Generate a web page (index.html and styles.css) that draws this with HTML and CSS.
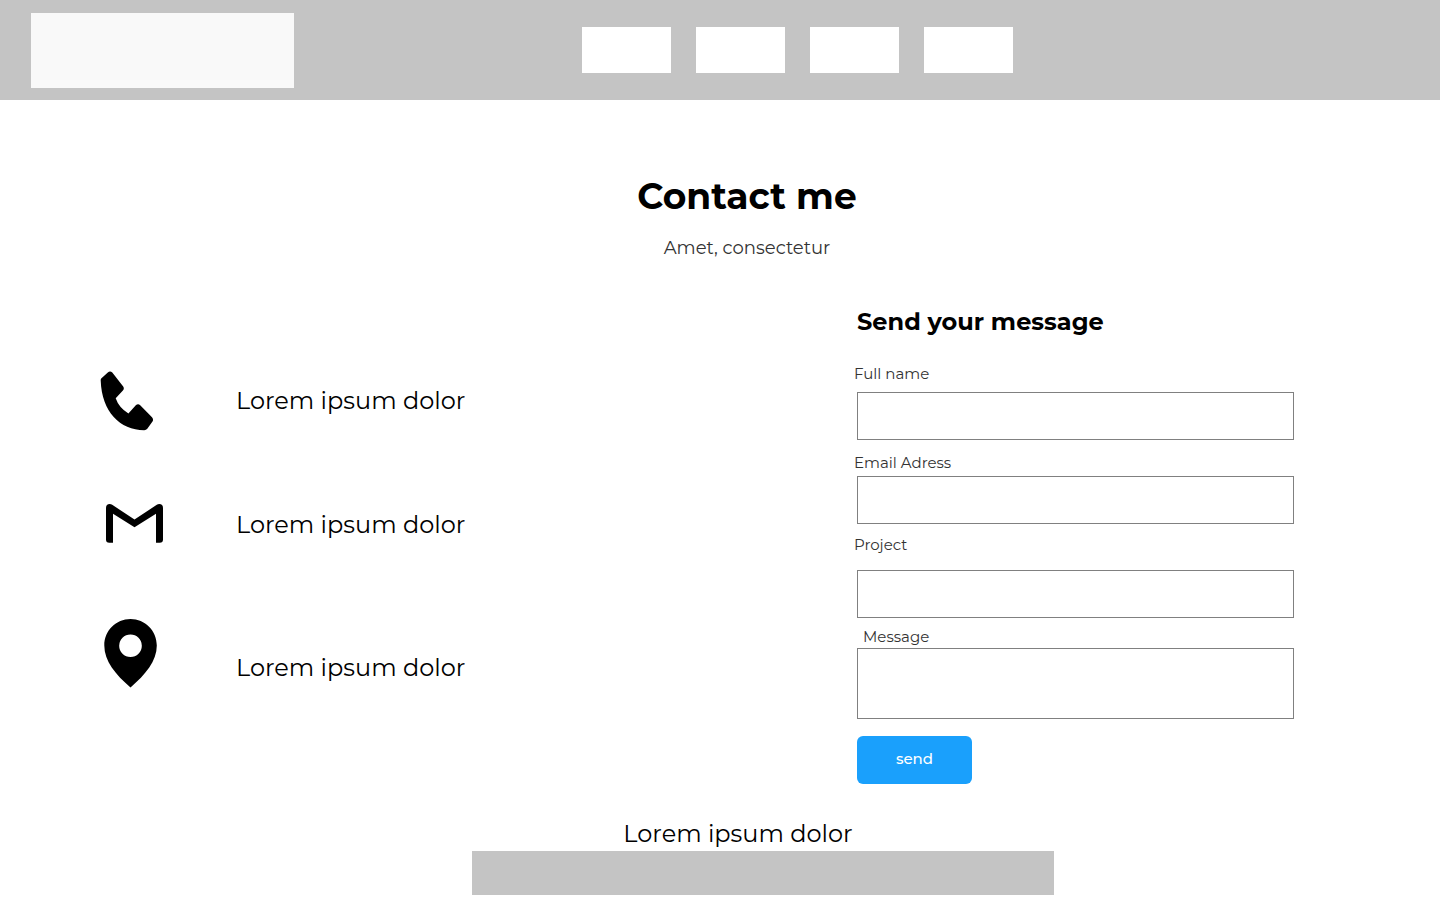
FILE: index.html
```html
<!DOCTYPE html>
<html lang="en">
<head>
<meta charset="utf-8">
<meta name="viewport" content="width=device-width, initial-scale=1">
<title>Contact me</title>
<link rel="stylesheet" href="styles.css">
</head>
<body>
<header class="header">
  <div class="logo"></div>
  <nav class="nav" aria-label="Main">
    <div class="nav-item"></div>
    <div class="nav-item"></div>
    <div class="nav-item"></div>
    <div class="nav-item"></div>
  </nav>
</header>
<main>
  <section class="intro">
    <h1 class="title">Contact me</h1>
    <p class="subtitle">Amet, consectetur</p>
  </section>
  <div class="columns">
    <ul class="contacts">
      <li class="contact">
        <svg class="icon" width="66" height="60" viewBox="100 371 66 60" aria-hidden="true"><path d="M101.200 378.500L107.800 372.400Q110.200 370.500 112.300 372.600L123.200 386.400Q124.600 388.600 122.900 390.600L115.700 398.200Q118.800 407.500 128.400 413.400L135.800 405.300Q138 403.300 140.200 405.200L152 417.200Q153.800 419.300 152.500 421.600L147.300 428.800Q146.200 430.200 144.200 430.200C120 430 101.800 412 100.700 380.500Q100.600 379.200 101.200 378.500Z"/></svg>
        <span>Lorem ipsum dolor</span>
      </li>
      <li class="contact">
        <svg class="icon" width="66" height="42" viewBox="100 504 66 42" aria-hidden="true"><path d="M106 508Q106 504 109.800 504Q111 504 112.200 504.800L134.500 519.500L156.800 504.800Q158 504 159.200 504Q163 504 163 508V539.500Q163 542.700 159.700 542.700H156V513.700L134.500 527.300L113 513.700V542.700H109.300Q106 542.700 106 539.500Z"/></svg>
        <span>Lorem ipsum dolor</span>
      </li>
      <li class="contact contact-place">
        <svg class="icon" width="66" height="69" viewBox="100 618 66 69" aria-hidden="true"><path fill-rule="evenodd" d="M130.500 618C145 618 156.800 629.500 156.800 644.500C156.800 660 145.500 673.500 130.500 686.500C115.500 673.500 104.300 660 104.300 644.500C104.300 629.500 116 618 130.500 618ZM130.500 633.500A11.300 11.300 0 1 0 130.500 656.100A11.300 11.300 0 1 0 130.500 633.500Z"/></svg>
        <span>Lorem ipsum dolor</span>
      </li>
    </ul>
    <form class="form">
      <h2 class="form-title">Send your message</h2>
      <div class="field field-name">
        <label for="name">Full name</label>
        <input id="name" type="text">
      </div>
      <div class="field field-email">
        <label for="email">Email Adress</label>
        <input id="email" type="email">
      </div>
      <div class="field field-project">
        <label for="project">Project</label>
        <input id="project" type="text">
      </div>
      <div class="field field-message">
        <label for="message">Message</label>
        <textarea id="message"></textarea>
      </div>
      <button class="send" type="submit">send</button>
    </form>
  </div>
</main>
<footer class="footer">
  <p class="footer-text">Lorem ipsum dolor</p>
  <div class="footer-bar"></div>
</footer>
</body>
</html>
```
FILE: styles.css
```css
* { box-sizing: border-box; }

body {
  margin: 0;
  background: #fff;
  color: #000;
  font-family: Montserrat, Inter, sans-serif;
}

h1, h2, p, ul { margin: 0; padding: 0; }

.header {
  display: flex;
  align-items: center;
  gap: 20vw;
  padding: 13px 31px 12px;
  background: #c4c4c4;
}

.logo { width: 263px; height: 75px; background: #f9f9f9; }

.nav { display: flex; gap: 25px; padding-bottom: 1px; }

.nav-item { width: 89px; height: 46px; background: #fff; }

.intro {
  padding: 72px 0 0 54px;
  text-align: center;
}

.title { font-size: 36px; line-height: 48px; font-weight: 700; }

.subtitle {
  margin-top: 16px;
  color: #333;
  font-size: 18px;
  line-height: 24px;
  font-weight: 400;
}

.columns {
  display: grid;
  grid-template-columns: 1fr 440px;
  padding: 46px 146px 0 100px;
}

.contacts {
  display: flex;
  flex-direction: column;
  gap: 72px;
  padding-top: 65px;
  list-style: none;
}

.contact {
  display: flex;
  align-items: center;
  gap: 70px;
  padding-bottom: 1px;
  font-size: 24px;
  line-height: 40px;
  font-weight: 400;
}

.contact-place { align-items: flex-end; }

.icon { flex: none; display: block; }

.form-title {
  padding-left: 3px;
  font-size: 24px;
  line-height: 32px;
  font-weight: 700;
}

.field {
  display: flex;
  flex-direction: column;
}

.field label {
  color: #333;
  font-size: 15px;
  line-height: 20px;
  font-weight: 400;
}

.field input, .field textarea {
  display: block;
  height: 48px;
  margin: 0 0 0 3px;
  padding: 8px 12px;
  border: 1px solid #808080;
  border-radius: 0;
  background: #fff;
  font: inherit;
  resize: none;
}

.field textarea { height: 71px; }

.field-name { gap: 8px; margin-top: 26px; }
.field-email { gap: 3px; margin-top: 13px; }
.field-project { gap: 15px; margin-top: 11px; }
.field-message { gap: 1px; margin-top: 9px; }
.field-message label { padding-left: 9px; }

.send {
  width: 115px;
  height: 48px;
  margin: 17px 0 0 3px;
  padding: 0 0 2px;
  border: 0;
  border-radius: 6px;
  background: #1aa0fc;
  color: #fff;
  font-family: inherit;
  font-size: 15px;
  line-height: 20px;
  font-weight: 500;
}

.footer {
  display: flex;
  flex-direction: column;
  align-items: center;
  padding: 34px 0 5px 36px;
}

.footer-text { font-size: 24px; line-height: 32px; font-weight: 400; }

.footer-bar {
  width: 582px;
  height: 44px;
  margin: 1px 0 0 50px;
  background: #c4c4c4;
}
```
